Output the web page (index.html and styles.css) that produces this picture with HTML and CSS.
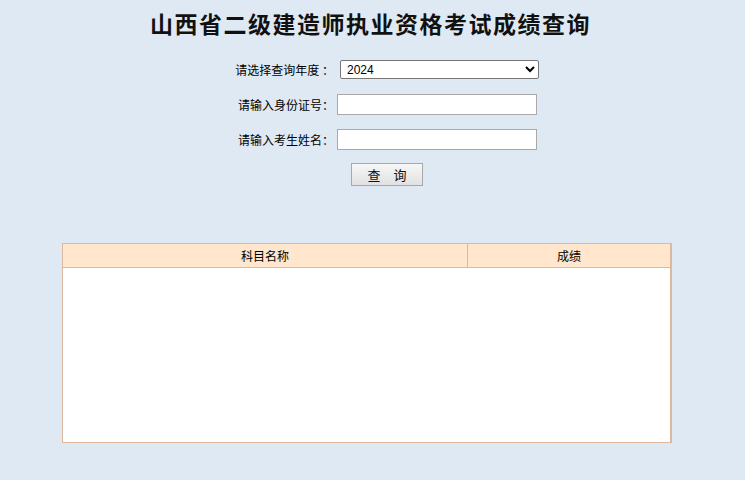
FILE: index.html
```html
<!DOCTYPE html>
<html lang="zh-CN">
<head>
    <meta charset="UTF-8">
    <title>山西省二级建造师执业资格考试成绩查询</title>
    <link rel="stylesheet" href="styles.css">
</head>
<body>
    <h1 class="title">山西省二级建造师执业资格考试成绩查询</h1>
    <form class="query-form">
        <div class="row">
            <label class="label">请选择查询年度 ：</label>
            <select class="field select">
                <option>2024</option>
            </select>
        </div>
        <div class="row">
            <label class="label">请输入身份证号：</label>
            <input class="field input" type="text">
        </div>
        <div class="row">
            <label class="label">请输入考生姓名：</label>
            <input class="field input" type="text">
        </div>
        <div class="row btn-row">
            <button class="btn" type="button">查　询</button>
        </div>
    </form>

    <table class="result">
        <thead>
            <tr>
                <th class="col-name">科目名称</th>
                <th class="col-score">成绩</th>
            </tr>
        </thead>
        <tbody>
            <tr><td class="empty" colspan="2"></td></tr>
        </tbody>
    </table>
</body>
</html>
```

FILE: styles.css
```css
* {
    margin: 0;
    padding: 0;
    box-sizing: border-box;
}
body {
    background: #dfe9f3;
    font-family: "Noto Sans CJK SC", "DejaVu Sans", sans-serif;
    font-size: 12px;
    color: #000;
    width: 745px;
    height: 480px;
    overflow: hidden;
}
.title {
    text-align: center;
    font-size: 23px;
    font-weight: bold;
    color: #111;
    line-height: 28px;
    padding-top: 9px;
    padding-right: 4px;
    letter-spacing: 1.5px;
}
/* Query form */
.query-form {
    margin: 15px 0 0 222px;
    width: 320px;
}
.row {
    display: flex;
    align-items: center;
    height: 35px;
}
.label {
    width: 112px;
    text-align: right;
    font-size: 12px;
    line-height: 20px;
}
.field {
    font-family: "Liberation Sans", Arial, sans-serif;
    font-size: 12px;
    background: #fff;
}
.select {
    width: 199px;
    height: 19px;
    margin-left: 6px;
    border: 1px solid #767676;
    border-radius: 2px;
    padding-left: 2px;
    color: #000;
}
.input {
    width: 200px;
    height: 21px;
    margin-left: 3px;
    border: 1px solid #a9a9a9;
    outline: none;
}
.btn-row {
    padding-left: 129px;
    height: 33px;
    align-items: flex-end;
}
.btn {
    width: 72px;
    height: 23px;
    border: 1px solid #a8a8a8;
    background: linear-gradient(#f7f7f7, #e1e1e1);
    font-family: "Noto Sans CJK SC", sans-serif;
    font-size: 13px;
    color: #111;
    margin-bottom: 4px;
}
/* Result table */
.result {
    margin: 53px 0 0 62px;
    width: 610px;
    border-collapse: collapse;
    background: #fff;
    border: 1px solid #ddb89d;
    border-right-width: 2px;
}
.result th {
    height: 24px;
    background: #ffe6cc;
    border: 1px solid #ddb89d;
    font-weight: normal;
    font-size: 12px;
    line-height: 20px;
}
.col-name {
    width: 405px;
}
.empty {
    height: 175px;
}
```
